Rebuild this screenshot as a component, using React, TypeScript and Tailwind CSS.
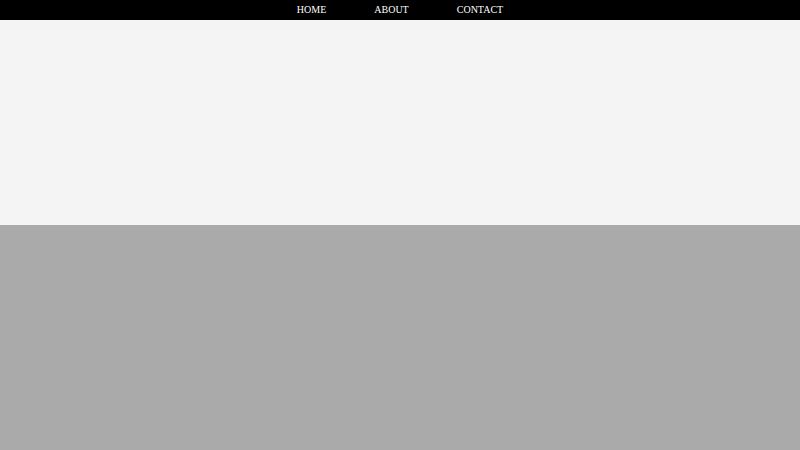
export default function App() {
  return (
    <div className="w-full min-h-screen h-[450px] flex flex-col bg-[#aaaaaa]" style={{ fontFamily: '"Liberation Serif", serif' }}>
      <nav className="h-[20px] bg-black flex items-center justify-center gap-[48px] pb-[2px] text-[10px] text-white">
        <a>HOME</a>
        <a>ABOUT</a>
        <a>CONTACT</a>
      </nav>
      <section className="h-[205px] bg-[#f4f4f4]"></section>
      <section className="flex-1 bg-[#aaaaaa]"></section>
    </div>
  );
}
